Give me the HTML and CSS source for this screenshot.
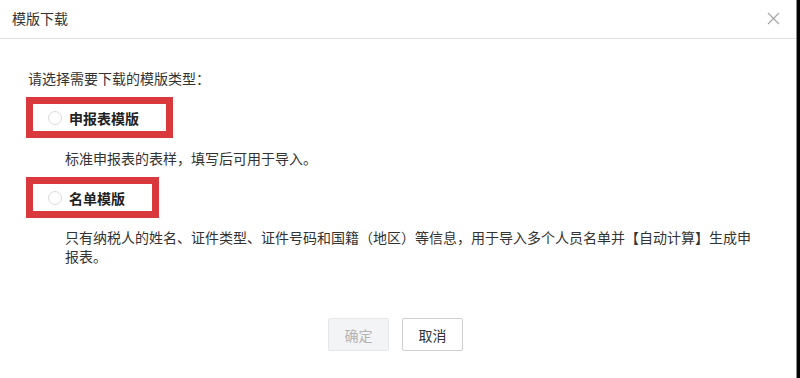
FILE: index.html
```html
<!DOCTYPE html>
<html lang="zh-CN">
<head>
<meta charset="utf-8">
<title>模版下载</title>
<link rel="stylesheet" href="styles.css">
</head>
<body>
<div class="page">
  <div class="dialog">
    <div class="header">
      <span class="title">模版下载</span>
      <svg class="close" width="13" height="13" viewBox="0 0 13 13" aria-hidden="true">
        <path d="M1 1L12 12M12 1L1 12" stroke="#a6a6a6" stroke-width="1.2" fill="none"/>
      </svg>
    </div>
    <div class="content">
      <div class="prompt">请选择需要下载的模版类型：</div>
      <div class="option">
        <span class="radio"></span>
        <span class="label">申报表模版</span>
      </div>
      <div class="desc">标准申报表的表样，填写后可用于导入。</div>
      <div class="option">
        <span class="radio"></span>
        <span class="label">名单模版</span>
      </div>
      <div class="desc desc-long">只有纳税人的姓名、证件类型、证件号码和国籍（地区）等信息，用于导入多个人员名单并【自动计算】生成申报表。</div>
    </div>
    <div class="footer">
      <button class="btn btn-disabled" type="button">确定</button>
      <button class="btn btn-default" type="button">取消</button>
    </div>
  </div>
  <div class="edge"></div>
</div>
</body>
</html>
```
FILE: styles.css
```css
* { box-sizing: border-box; }
html, body {
  margin: 0;
  padding: 0;
  background: #fff;
}
body {
  font-family: "Noto Sans CJK SC", "Microsoft YaHei", sans-serif;
  color: #333;
  font-size: 14px;
}
.page {
  display: flex;
  width: 800px;
  height: 378px;
  overflow: hidden;
}
.dialog {
  width: 797px;
  height: 378px;
  background: #fff;
  border-right: 1px solid #8c8c8c;
  display: flex;
  flex-direction: column;
}
.edge {
  flex: 1;
  background: #050505;
}
.header {
  height: 39px;
  border-bottom: 1px solid #e4e4e4;
  padding: 0 16px 3px 12px;
  display: flex;
  align-items: center;
  justify-content: space-between;
}
.title {
  font-size: 14px;
  line-height: 20px;
  color: #333;
}
.close {
  display: block;
  margin-top: 1px;
}
.content {
  padding: 29px 0 0 28px;
}
.prompt {
  line-height: 20px;
  color: #333;
}
.option {
  display: inline-flex;
  align-items: center;
  gap: 7px;
  margin: 9px 0 0 -2px;
  height: 41px;
  border: 7px solid #d9383d;
  padding: 0 27px 0 15px;
}
.radio {
  width: 14px;
  height: 14px;
  border-radius: 50%;
  border: 1px solid #dcdcdc;
  background: #fff;
}
.label {
  font-weight: bold;
  font-size: 14px;
  line-height: 20px;
  color: #222;
}
.desc {
  margin: 10px 0 0 37px;
  line-height: 20px;
  color: #333;
}
.desc-long {
  width: 692px;
  line-height: 19px;
  margin-top: 10px;
}
.footer {
  display: flex;
  justify-content: center;
  gap: 13px;
  padding-right: 5px;
  margin-top: 52px;
}
.btn {
  width: 61px;
  height: 33px;
  font-family: inherit;
  font-size: 14px;
  border-radius: 2px;
  padding: 0;
}
.btn-disabled {
  background: #f3f4f6;
  border: 1px solid #e6e7ea;
  color: #b3b3b3;
}
.btn-default {
  background: #fff;
  border: 1px solid #cfcfcf;
  color: #333;
}
```
